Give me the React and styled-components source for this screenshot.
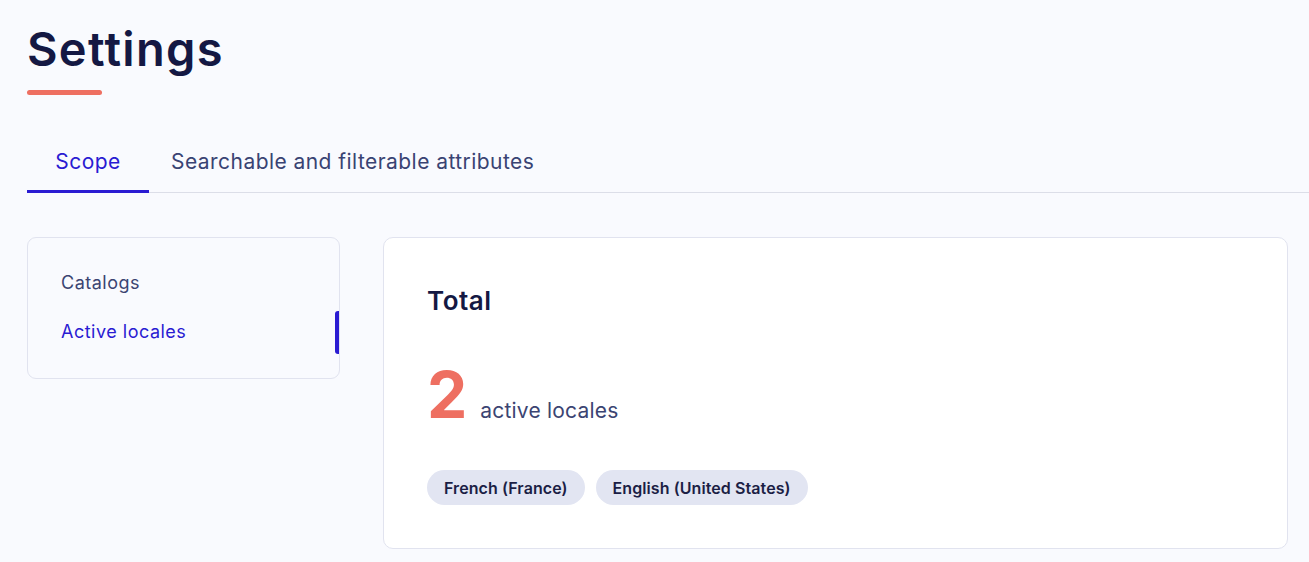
import React from 'react';
import styled, { createGlobalStyle } from 'styled-components';

const GlobalStyle = createGlobalStyle`
    body {
        margin: 0;
        background: #f9fafe;
        font-family: Inter, "Noto Sans", sans-serif;
        color: #16194a;
    }
`

const Page = styled.div`
    padding: 21px 0 0 27px;
`

const Title = styled.h1`
    margin: 0;
    font-size: 47px;
    font-weight: 600;
    line-height: 56px;
    letter-spacing: 1.3px;
    color: #141843;
`

const TitleBar = styled.div`
    width: 75px;
    height: 5px;
    border-radius: 3px;
    background: #ee6f61;
    margin-top: 13px;
`

const Tabs = styled.div`
    display: flex;
    margin-top: 37px;
    border-bottom: 1px solid #dcdee8;
`

const Tab = styled.div`
    min-width: 122px;
    box-sizing: border-box;
    padding: 0 22px;
    height: 60px;
    display: flex;
    align-items: center;
    justify-content: center;
    font-size: 21px;
    letter-spacing: 0.45px;
    color: ${p => (p.active ? '#2a1bd2' : '#394373')};
    border-bottom: 3px solid ${p => (p.active ? '#2a1bd2' : 'transparent')};
    margin-bottom: -1px;
    margin-top: 1px;
    cursor: pointer;
`

const Body = styled.div`
    display: flex;
    align-items: flex-start;
    gap: 43px;
    margin-top: 44px;
    padding-right: 21px;
`

const SideCard = styled.div`
    width: 313px;
    box-sizing: border-box;
    border: 1px solid #e1e3ef;
    border-radius: 9px;
    padding: 20px 0 22px;
    display: flex;
    flex-direction: column;
`

const SideItem = styled.div`
    position: relative;
    height: 49px;
    display: flex;
    align-items: center;
    padding-left: 33px;
    font-size: 18px;
    letter-spacing: 0.5px;
    color: ${p => (p.active ? '#2a1bd2' : '#3b4472')};

    &::after {
        content: '';
        display: ${p => (p.active ? 'block' : 'none')};
        position: absolute;
        right: 0;
        top: 4px;
        width: 4px;
        height: 43px;
        border-radius: 3px 0 0 3px;
        background: #2a1bd2;
    }
`

const MainCard = styled.div`
    flex: 1;
    height: 312px;
    box-sizing: border-box;
    background: #ffffff;
    border: 1px solid #e1e3ef;
    border-radius: 10px;
    padding: 45px 43px;
`

const CardTitle = styled.h2`
    margin: 0;
    font-size: 26px;
    font-weight: 600;
    line-height: 36px;
    letter-spacing: 0.5px;
    color: #141843;
`

const CountRow = styled.div`
    display: flex;
    align-items: baseline;
    gap: 13px;
    margin-top: 41px;
`

const Count = styled.span`
    font-size: 64px;
    font-weight: 700;
    line-height: 70px;
    color: #ee6f61;
`

const CountLabel = styled.span`
    font-size: 21px;
    letter-spacing: 0.2px;
    color: #3b4472;
`

const Chips = styled.div`
    display: flex;
    gap: 11px;
    margin-top: 40px;
`

const Chip = styled.span`
    height: 35px;
    display: inline-flex;
    align-items: center;
    padding: 0 17px;
    border-radius: 18px;
    background: #e2e5f2;
    font-size: 16px;
    font-weight: 600;
    letter-spacing: 0.08px;
    color: #1b1e45;
`

export default function App() {
    const locales = ['French (France)', 'English (United States)'];

    return (
        <Page>
            <GlobalStyle />
            <Title>Settings</Title>
            <TitleBar />
            <Tabs>
                <Tab active>Scope</Tab>
                <Tab>Searchable and filterable attributes</Tab>
            </Tabs>
            <Body>
                <SideCard>
                    <SideItem>Catalogs</SideItem>
                    <SideItem active>Active locales</SideItem>
                </SideCard>
                <MainCard>
                    <CardTitle>Total</CardTitle>
                    <CountRow>
                        <Count>{locales.length}</Count>
                        <CountLabel>active locales</CountLabel>
                    </CountRow>
                    <Chips>
                        {locales.map(l => (
                            <Chip key={l}>{l}</Chip>
                        ))}
                    </Chips>
                </MainCard>
            </Body>
        </Page>
    );
}
